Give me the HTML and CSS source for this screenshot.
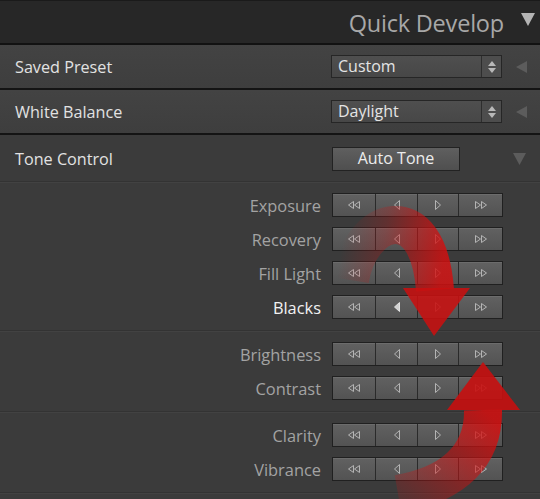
FILE: index.html
```html
<!DOCTYPE html>
<html>
<head>
<meta charset="utf-8">
<link rel="stylesheet" href="styles.css">
</head>
<body>
<div class="panel">
  <div class="header">
    <span class="title">Quick Develop</span>
    <svg class="hdr-tri" width="14" height="13" viewBox="0 0 14 13"><polygon points="0,0 14,0 7,13" fill="#b4b4b4"/></svg>
  </div>

  <div class="row">
    <span class="label">Saved Preset</span>
    <div class="select">
      <span class="sel-text">Custom</span>
      <span class="spin"><svg width="8" height="12" viewBox="0 0 8 12"><polygon points="4,0 8,5 0,5" fill="#b8b8b8"/><polygon points="0,7 8,7 4,12" fill="#b8b8b8"/></svg></span>
    </div>
    <svg class="side-tri" width="11" height="12" viewBox="0 0 11 12"><polygon points="11,0 11,12 0,6" fill="#5c5c5c"/></svg>
  </div>

  <div class="row">
    <span class="label">White Balance</span>
    <div class="select">
      <span class="sel-text">Daylight</span>
      <span class="spin"><svg width="8" height="12" viewBox="0 0 8 12"><polygon points="4,0 8,5 0,5" fill="#b8b8b8"/><polygon points="0,7 8,7 4,12" fill="#b8b8b8"/></svg></span>
    </div>
    <svg class="side-tri" width="11" height="12" viewBox="0 0 11 12"><polygon points="11,0 11,12 0,6" fill="#5c5c5c"/></svg>
  </div>

  <div class="tone-head">
    <span class="label">Tone Control</span>
    <div class="auto-btn">Auto Tone</div>
    <svg class="tone-tri" width="13" height="12" viewBox="0 0 13 12"><polygon points="0,0 13,0 6.5,12" fill="#5c5c5c"/></svg>
  </div>

  <div class="group first">
    <div class="srow"><span class="slabel">Exposure</span><div class="btns"><span class="b b1"><svg width="12" height="8" viewBox="0 0 12 8"><polygon points="5.5,0.5 5.5,7.5 0.5,4" class="ic"/><polygon points="11.5,0.5 11.5,7.5 6.5,4" class="ic"/></svg></span><span class="b b2"><svg width="6" height="10" viewBox="0 0 6 10"><polygon points="5.5,0.5 5.5,9.5 0.5,5" class="ic"/></svg></span><span class="b b3"><svg width="6" height="10" viewBox="0 0 6 10"><polygon points="0.5,0.5 0.5,9.5 5.5,5" class="ic"/></svg></span><span class="b b4"><svg width="12" height="8" viewBox="0 0 12 8"><polygon points="0.5,0.5 0.5,7.5 5.5,4" class="ic"/><polygon points="6.5,0.5 6.5,7.5 11.5,4" class="ic"/></svg></span></div></div>
    <div class="srow"><span class="slabel">Recovery</span><div class="btns"><span class="b b1"><svg width="12" height="8" viewBox="0 0 12 8"><polygon points="5.5,0.5 5.5,7.5 0.5,4" class="ic"/><polygon points="11.5,0.5 11.5,7.5 6.5,4" class="ic"/></svg></span><span class="b b2"><svg width="6" height="10" viewBox="0 0 6 10"><polygon points="5.5,0.5 5.5,9.5 0.5,5" class="ic"/></svg></span><span class="b b3"><svg width="6" height="10" viewBox="0 0 6 10"><polygon points="0.5,0.5 0.5,9.5 5.5,5" class="ic"/></svg></span><span class="b b4"><svg width="12" height="8" viewBox="0 0 12 8"><polygon points="0.5,0.5 0.5,7.5 5.5,4" class="ic"/><polygon points="6.5,0.5 6.5,7.5 11.5,4" class="ic"/></svg></span></div></div>
    <div class="srow"><span class="slabel">Fill Light</span><div class="btns"><span class="b b1"><svg width="12" height="8" viewBox="0 0 12 8"><polygon points="5.5,0.5 5.5,7.5 0.5,4" class="ic"/><polygon points="11.5,0.5 11.5,7.5 6.5,4" class="ic"/></svg></span><span class="b b2"><svg width="6" height="10" viewBox="0 0 6 10"><polygon points="5.5,0.5 5.5,9.5 0.5,5" class="ic"/></svg></span><span class="b b3"><svg width="6" height="10" viewBox="0 0 6 10"><polygon points="0.5,0.5 0.5,9.5 5.5,5" class="ic"/></svg></span><span class="b b4"><svg width="12" height="8" viewBox="0 0 12 8"><polygon points="0.5,0.5 0.5,7.5 5.5,4" class="ic"/><polygon points="6.5,0.5 6.5,7.5 11.5,4" class="ic"/></svg></span></div></div>
    <div class="srow"><span class="slabel active">Blacks</span><div class="btns"><span class="b b1"><svg width="12" height="8" viewBox="0 0 12 8"><polygon points="5.5,0.5 5.5,7.5 0.5,4" class="ic"/><polygon points="11.5,0.5 11.5,7.5 6.5,4" class="ic"/></svg></span><span class="b b2"><svg width="6" height="10" viewBox="0 0 6 10"><polygon points="5.5,0.5 5.5,9.5 0.5,5" class="ic hi"/></svg></span><span class="b b3"><svg width="6" height="10" viewBox="0 0 6 10"><polygon points="0.5,0.5 0.5,9.5 5.5,5" class="ic"/></svg></span><span class="b b4"><svg width="12" height="8" viewBox="0 0 12 8"><polygon points="0.5,0.5 0.5,7.5 5.5,4" class="ic"/><polygon points="6.5,0.5 6.5,7.5 11.5,4" class="ic"/></svg></span></div></div>
  </div>

  <div class="group">
    <div class="srow"><span class="slabel">Brightness</span><div class="btns"><span class="b b1"><svg width="12" height="8" viewBox="0 0 12 8"><polygon points="5.5,0.5 5.5,7.5 0.5,4" class="ic"/><polygon points="11.5,0.5 11.5,7.5 6.5,4" class="ic"/></svg></span><span class="b b2"><svg width="6" height="10" viewBox="0 0 6 10"><polygon points="5.5,0.5 5.5,9.5 0.5,5" class="ic"/></svg></span><span class="b b3"><svg width="6" height="10" viewBox="0 0 6 10"><polygon points="0.5,0.5 0.5,9.5 5.5,5" class="ic"/></svg></span><span class="b b4"><svg width="12" height="8" viewBox="0 0 12 8"><polygon points="0.5,0.5 0.5,7.5 5.5,4" class="ic"/><polygon points="6.5,0.5 6.5,7.5 11.5,4" class="ic"/></svg></span></div></div>
    <div class="srow"><span class="slabel">Contrast</span><div class="btns"><span class="b b1"><svg width="12" height="8" viewBox="0 0 12 8"><polygon points="5.5,0.5 5.5,7.5 0.5,4" class="ic"/><polygon points="11.5,0.5 11.5,7.5 6.5,4" class="ic"/></svg></span><span class="b b2"><svg width="6" height="10" viewBox="0 0 6 10"><polygon points="5.5,0.5 5.5,9.5 0.5,5" class="ic"/></svg></span><span class="b b3"><svg width="6" height="10" viewBox="0 0 6 10"><polygon points="0.5,0.5 0.5,9.5 5.5,5" class="ic"/></svg></span><span class="b b4"><svg width="12" height="8" viewBox="0 0 12 8"><polygon points="0.5,0.5 0.5,7.5 5.5,4" class="ic"/><polygon points="6.5,0.5 6.5,7.5 11.5,4" class="ic"/></svg></span></div></div>
  </div>

  <div class="group">
    <div class="srow"><span class="slabel">Clarity</span><div class="btns"><span class="b b1"><svg width="12" height="8" viewBox="0 0 12 8"><polygon points="5.5,0.5 5.5,7.5 0.5,4" class="ic"/><polygon points="11.5,0.5 11.5,7.5 6.5,4" class="ic"/></svg></span><span class="b b2"><svg width="6" height="10" viewBox="0 0 6 10"><polygon points="5.5,0.5 5.5,9.5 0.5,5" class="ic"/></svg></span><span class="b b3"><svg width="6" height="10" viewBox="0 0 6 10"><polygon points="0.5,0.5 0.5,9.5 5.5,5" class="ic"/></svg></span><span class="b b4"><svg width="12" height="8" viewBox="0 0 12 8"><polygon points="0.5,0.5 0.5,7.5 5.5,4" class="ic"/><polygon points="6.5,0.5 6.5,7.5 11.5,4" class="ic"/></svg></span></div></div>
    <div class="srow"><span class="slabel">Vibrance</span><div class="btns"><span class="b b1"><svg width="12" height="8" viewBox="0 0 12 8"><polygon points="5.5,0.5 5.5,7.5 0.5,4" class="ic"/><polygon points="11.5,0.5 11.5,7.5 6.5,4" class="ic"/></svg></span><span class="b b2"><svg width="6" height="10" viewBox="0 0 6 10"><polygon points="5.5,0.5 5.5,9.5 0.5,5" class="ic"/></svg></span><span class="b b3"><svg width="6" height="10" viewBox="0 0 6 10"><polygon points="0.5,0.5 0.5,9.5 5.5,5" class="ic"/></svg></span><span class="b b4"><svg width="12" height="8" viewBox="0 0 12 8"><polygon points="0.5,0.5 0.5,7.5 5.5,4" class="ic"/><polygon points="6.5,0.5 6.5,7.5 11.5,4" class="ic"/></svg></span></div></div>
  </div>

  <svg class="arrows" width="540" height="499" viewBox="0 0 540 499">
    <defs>
      <linearGradient id="g1" gradientUnits="userSpaceOnUse" x1="338" y1="270" x2="440" y2="285">
        <stop offset="0" stop-color="#d01010" stop-opacity="0"/>
        <stop offset="0.4" stop-color="#d01010" stop-opacity="0.25"/>
        <stop offset="1" stop-color="#d01010" stop-opacity="0.85"/>
      </linearGradient>
      <linearGradient id="g2" gradientUnits="userSpaceOnUse" x1="395" y1="499" x2="485" y2="410">
        <stop offset="0" stop-color="#d01010" stop-opacity="0.15"/>
        <stop offset="0.5" stop-color="#d01010" stop-opacity="0.5"/>
        <stop offset="1" stop-color="#d01010" stop-opacity="0.88"/>
      </linearGradient>
    </defs>
    <path d="M350 280 C 360 216, 428 194, 435 290" fill="none" stroke="url(#g1)" stroke-width="38"/>
    <polygon points="403,288 470,288 434,336" fill="#c81010" fill-opacity="0.88"/>
    <path d="M398 494 C 455 484, 484 455, 483 410" fill="none" stroke="url(#g2)" stroke-width="38"/>
    <polygon points="447,410 520,410 483,362" fill="#c81010" fill-opacity="0.9"/>
  </svg>
</div>
</body>
</html>
```
FILE: styles.css
```css
* { box-sizing: border-box; }
html, body { margin: 0; padding: 0; }
body {
  width: 540px;
  height: 499px;
  overflow: hidden;
  background: #3b3b3b;
  font-family: "Open Sans", "Noto Sans", sans-serif;
}
.panel {
  position: relative;
  width: 540px;
  height: 499px;
  background: #3b3b3b;
}
.header {
  height: 45px;
  background: #272727;
  border-top: 1px solid #1a1a1a;
  border-bottom: 2px solid #121212;
  display: flex;
  align-items: center;
  justify-content: flex-end;
  padding-right: 5px;
}
.title {
  font-size: 23.5px;
  color: #a8a8a8;
  letter-spacing: -0.2px;
  margin-right: 17px;
  padding-top: 1px;
}
.hdr-tri { margin-top: -5px; }
.row {
  height: 45px;
  background: linear-gradient(#434343, #3e3e3e);
  border-bottom: 2px solid #141414;
  display: flex;
  align-items: center;
  padding: 0 13px 0 15px;
}
.label {
  flex: 1;
  font-size: 16.2px;
  color: #e2e2e2;
}
.select {
  width: 171px;
  height: 23px;
  border: 1px solid #262626;
  background: linear-gradient(#4f4f4f, #474747);
  display: flex;
  align-items: stretch;
  margin-right: 14px;
}
.sel-text {
  flex: 1;
  font-size: 16px;
  color: #e4e4e4;
  padding-left: 6px;
  line-height: 20px;
}
.spin {
  width: 20px;
  border-left: 1px solid #2e2e2e;
  display: flex;
  align-items: center;
  justify-content: center;
  background: #4d4d4d;
}
.side-tri { display: block; }
.tone-head {
  height: 47px;
  display: flex;
  align-items: center;
  padding: 2px 14px 0 15px;
  border-bottom: 1px solid #333333;
  box-shadow: 0 1px 0 #424242;
}
.auto-btn {
  width: 128px;
  height: 24px;
  border: 1px solid #222;
  background: linear-gradient(#5f5f5f, #4f4f4f);
  color: #ececec;
  font-size: 16px;
  text-align: center;
  line-height: 21px;
  margin-right: 53px;
}
.group {
  display: flex;
  flex-direction: column;
  gap: 10px;
  padding: 11px 37px 11px 0;
  border-bottom: 1px solid #333333;
  box-shadow: 0 1px 0 #424242;
}
.srow {
  display: flex;
  align-items: center;
  justify-content: flex-end;
  gap: 11px;
  height: 24px;
}
.slabel {
  font-size: 16.4px;
  color: #a3a3a3;
}
.slabel.active { color: #f2f2f2; }
.btns {
  width: 171px;
  height: 24px;
  border: 1px solid #202020;
  display: flex;
  background: #2a2a2a;
  gap: 1px;
}
.b {
  display: flex;
  align-items: center;
  justify-content: center;
  background: linear-gradient(#616161, #535353);
  box-shadow: inset 0 1px 0 #6c6c6c;
}
.b1 { width: 42px; }
.b2 { width: 41px; }
.b3 { width: 40px; }
.b4 { flex: 1; }
.ic {
  fill: #5c5c5c;
  stroke: #b4b4b4;
  stroke-width: 1;
}
.ic.hi { fill: #d0d0d0; stroke: #e0e0e0; }
.arrows {
  position: absolute;
  left: 0;
  top: 0;
  pointer-events: none;
}
```
